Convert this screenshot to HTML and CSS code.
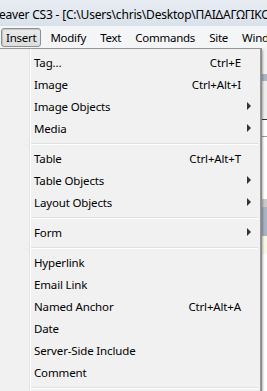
FILE: index.html
```html
<!DOCTYPE html>
<html lang="en">
  <head>
    <meta charset="UTF-8" />
    <title>Insert menu</title>
    <link rel="stylesheet" href="styles.css">
  </head>
  <body>
    <div class="window">
      <div class="titlebar">
        <span class="title">eaver CS3 - [C:\Users\chris\Desktop\ΠΑΙΔΑΓΩΓΙΚΟ</span>
      </div>

      <!-- menu bar -->
      <div class="menubar">
        <span class="menubar-item active">Insert</span>
        <span class="menubar-item">Modify</span>
        <span class="menubar-item">Text</span>
        <span class="menubar-item">Commands</span>
        <span class="menubar-item">Site</span>
        <span class="menubar-item">Window</span>
      </div>

      <!-- document area behind the menu -->
      <div class="workspace">
        <div class="band toolbar"></div>
        <div class="band tabs"></div>
        <div class="band panel"></div>
        <div class="band field"></div>
        <div class="band page"></div>
        <div class="band rule"></div>
        <div class="band steel"></div>
        <div class="band note"></div>
        <div class="band page"></div>
      </div>

      <!-- Insert dropdown -->
      <div class="dropdown">
        <div class="menu-item"><span class="label">Tag...</span><span class="shortcut">Ctrl+E</span><span class="sub"></span></div>
        <div class="menu-item"><span class="label">Image</span><span class="shortcut">Ctrl+Alt+I</span><span class="sub"></span></div>
        <div class="menu-item"><span class="label">Image Objects</span><span class="sub arrow"></span></div>
        <div class="menu-item"><span class="label">Media</span><span class="sub arrow"></span></div>
        <div class="sep"></div>
        <div class="menu-item"><span class="label">Table</span><span class="shortcut">Ctrl+Alt+T</span><span class="sub"></span></div>
        <div class="menu-item"><span class="label">Table Objects</span><span class="sub arrow"></span></div>
        <div class="menu-item"><span class="label">Layout Objects</span><span class="sub arrow"></span></div>
        <div class="sep"></div>
        <div class="menu-item"><span class="label">Form</span><span class="sub arrow"></span></div>
        <div class="sep"></div>
        <div class="menu-item"><span class="label">Hyperlink</span><span class="sub"></span></div>
        <div class="menu-item"><span class="label">Email Link</span><span class="sub"></span></div>
        <div class="menu-item"><span class="label">Named Anchor</span><span class="shortcut">Ctrl+Alt+A</span><span class="sub"></span></div>
        <div class="menu-item"><span class="label">Date</span><span class="sub"></span></div>
        <div class="menu-item"><span class="label">Server-Side Include</span><span class="sub"></span></div>
        <div class="menu-item"><span class="label">Comment</span><span class="sub"></span></div>
        <div class="sep"></div>
      </div>
    </div>
  </body>
</html>
```

FILE: styles.css
```css
body {
  margin: 0;
  font-family: "Noto Sans", "Open Sans", sans-serif;
  font-size: 11.5px;
  letter-spacing: -0.15px;
  color: #000;
  background: #fff;
}

.window {
  position: relative;
  width: 267px;
  height: 391px;
  overflow: hidden;
}

.titlebar {
  height: 26px;
  line-height: 26px;
  font-size: 12px;
  letter-spacing: -0.2px;
  background: linear-gradient(#e8edf3, #d9e1ea);
  white-space: nowrap;
  overflow: hidden;
}

.title {
  display: block;
  padding-top: 2px;
  margin-left: -1px;
}

.menubar {
  display: flex;
  gap: 4px;
  height: 22px;
  padding: 1px 0 0 1px;
  box-sizing: border-box;
  align-items: center;
  letter-spacing: -0.25px;
  background: #f4f5f6;
  white-space: nowrap;
  overflow: hidden;
}

.menubar-item {
  padding: 0 4px;
  height: 17px;
  line-height: 17px;
  border: 1px solid transparent;
  border-radius: 3px;
}

.menubar-item.active {
  border-color: #8e8f8f;
  background: linear-gradient(#e9eaea, #dcdddd);
  box-shadow: inset 1px 1px 1px rgba(0, 0, 0, 0.15);
}

.workspace {
  display: flex;
  flex-direction: column;
}

.band.toolbar { height: 26px; background: #f2f2f2; }
.band.tabs { height: 7px; background: #a9b8c7; }
.band.panel { height: 38px; background: #eeeeee; }
.band.field { height: 16px; background: #fff; border-top: 1px solid #333; border-bottom: 1px solid #999; }
.band.page { height: 62px; background: #fff; }
.band.rule { height: 8px; background: #c9c9c9; }
.band.steel { height: 29px; background: #a6b4c3; }
.band.note { height: 18px; background: #f8f8e4; }

/* dropdown */
.dropdown {
  position: absolute;
  top: 48px;
  left: -1px;
  width: 260px;
  padding-top: 2px;
  border: 1px solid #979797;
  background: linear-gradient(to right, #f1f1f1 29px, #e2e3e3 29px, #e2e3e3 30px, #fff 30px, #fff 31px, #f1f1f1 31px);
  box-shadow: 1px 0 0 #8a8a8a, 2px 2px 2px rgba(0, 0, 0, 0.3);
}

.menu-item {
  display: flex;
  align-items: center;
  height: 22px;
  padding-left: 34px;
  white-space: nowrap;
}

.label {
  flex: 1;
}

.sub {
  position: relative;
  flex: none;
  width: 19px;
  height: 22px;
}

.sub.arrow::after {
  content: "";
  position: absolute;
  left: 6px;
  top: 7px;
  border-left: 4px solid #333;
  border-top: 4px solid transparent;
  border-bottom: 4px solid transparent;
}

.sep {
  height: 1px;
  margin: 4px 2px 2px 31px;
  background: #e0e0e0;
  border-bottom: 1px solid #fff;
}
```
